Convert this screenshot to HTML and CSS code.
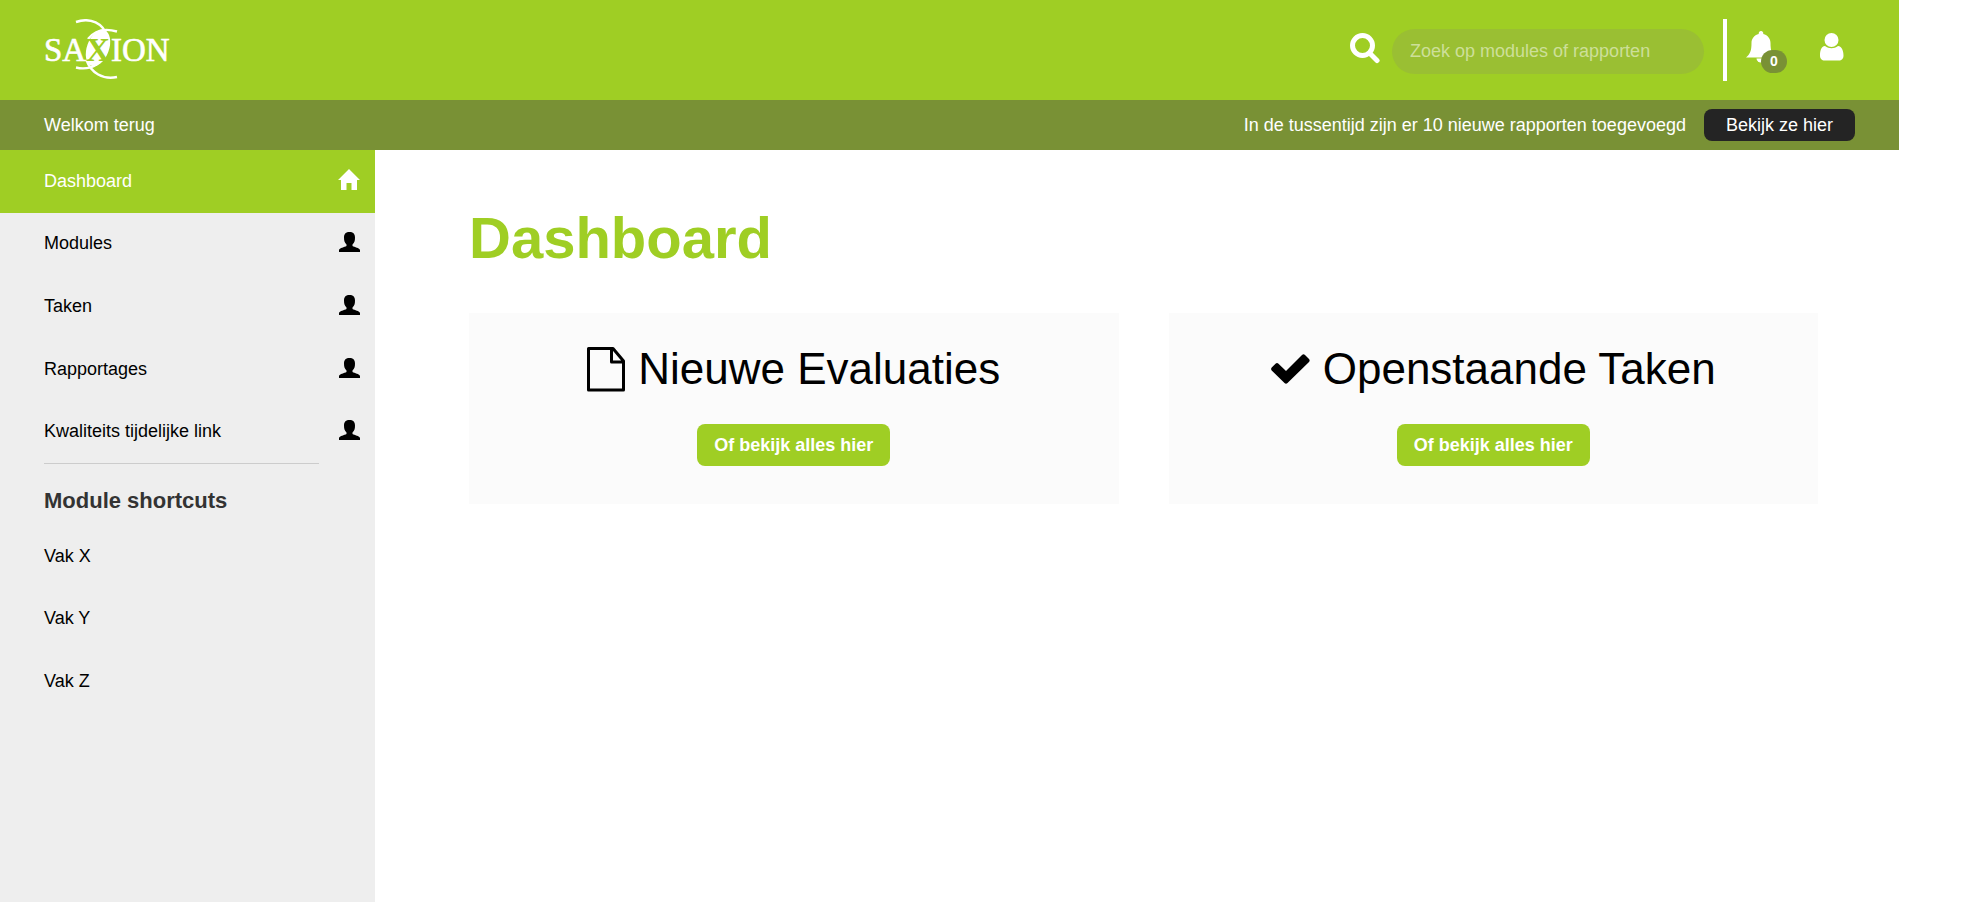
FILE: index.html
```html
<!DOCTYPE html>
<html lang="nl">
<head>
<meta charset="utf-8">
<title>Saxion - Dashboard</title>
<link rel="stylesheet" href="styles.css">
</head>
<body>
<div class="page">
  <header class="header">
    <a class="logo" href="#" aria-label="Saxion">
      <svg width="126" height="62" viewBox="0 0 126 62" fill="#fff">
        <g class="logo-text">
          <text x="0" y="42">SA</text>
          <text x="67" y="42">ION</text>
        </g>
        <ellipse cx="54" cy="29" rx="11" ry="19" transform="rotate(20 54 29)"/>
        <g fill="none" stroke="#fff" stroke-width="2.400">
          <path d="M32 3C46 -2 60 4 63 18"/>
          <path d="M44 20C51 11 61 9 73 12.500"/>
          <path d="M32 48.500C42 51 52 48 57 41"/>
          <path d="M42.500 41C47 54 59 61 73 58"/>
        </g>
        <text class="logo-x" x="54" y="42">X</text>
      </svg>
    </a>
    <form class="search" role="search">
      <button class="icon-button" type="button" aria-label="Zoeken">
        <svg width="30" height="31" viewBox="0 0 30 31" fill="none" stroke="#fff" stroke-linecap="round">
          <circle cx="12.500" cy="12.500" r="10" stroke-width="5"/>
          <path d="M20 20.500L27 27.500" stroke-width="5"/>
        </svg>
      </button>
      <input class="search-input" type="search" aria-label="Zoek op modules of rapporten" placeholder="Zoek op modules of rapporten">
    </form>
    <div class="user-tools">
      <button class="icon-button bell" type="button" aria-label="Meldingen">
        <svg width="30" height="32" viewBox="0 0 30 32" fill="#fff">
          <path d="M15 0a2.300 2.300 0 0 1 2.200 3C22 4 24.500 8 24.500 12C24.500 20 26 23 30 26.500H0C4 23 5.500 20 5.500 12C5.500 8 8 4 12.800 3A2.300 2.300 0 0 1 15 0Z"/>
          <path d="M10.500 27.500A4.500 4 0 0 0 15 31.500A4.500 4 0 0 0 19.500 27.500Z"/>
        </svg>
        <span class="badge">0</span>
      </button>
      <button class="icon-button" type="button" aria-label="Profiel">
        <svg width="24" height="28" viewBox="0 0 24 28" fill="#fff">
          <circle cx="11.500" cy="7" r="7"/>
          <path d="M5 13C9 16 14 16 18 13C22 13.500 23.500 18 23.500 22.500C23.500 26 21.500 27.500 19 27.500H4.500C2 27.500 0 26 0 22.500C0 18 1 13.500 5 13Z"/>
        </svg>
      </button>
    </div>
  </header>
  <div class="welcome">
    <span>Welkom terug</span>
    <span class="welcome-news">In de tussentijd zijn er 10 nieuwe rapporten toegevoegd</span>
    <a class="dark-button" href="#">Bekijk ze hier</a>
  </div>
  <div class="body">
    <aside class="sidebar">
      <svg class="symbols" aria-hidden="true">
        <symbol id="person" viewBox="0 0 21 20">
          <path d="M10.500 0C14 0 16 1.800 16 5.500C16 9 15.500 10.500 13.500 12.500V14C15.500 15 20.500 16 21 18V20H0V18C.5 16 5.500 15 7.500 14V12.500C5.500 10.500 5 9 5 5.500C5 1.800 7 0 10.500 0Z"/>
        </symbol>
      </svg>
      <nav class="nav">
        <a class="nav-item active" href="#">Dashboard
          <svg width="22" height="21" viewBox="0 0 22 21"><path d="M11 0L22 11H19V21H13.500V14H8.500V21H3V11H0Z"/></svg></a>
        <a class="nav-item" href="#">Modules <svg width="21" height="20"><use href="#person"/></svg></a>
        <a class="nav-item" href="#">Taken <svg width="21" height="20"><use href="#person"/></svg></a>
        <a class="nav-item" href="#">Rapportages <svg width="21" height="20"><use href="#person"/></svg></a>
        <a class="nav-item" href="#">Kwaliteits tijdelijke link <svg width="21" height="20"><use href="#person"/></svg></a>
      </nav>
      <hr class="rule">
      <h2 class="shortcuts-title">Module shortcuts</h2>
      <nav class="nav shortcuts">
        <a class="nav-item" href="#">Vak X</a>
        <a class="nav-item" href="#">Vak Y</a>
        <a class="nav-item" href="#">Vak Z</a>
      </nav>
    </aside>
    <main class="main">
      <h1 class="title">Dashboard</h1>
      <div class="cards">
        <section class="card">
          <h2 class="card-title">
            <svg width="38" height="45" viewBox="0 0 38 45" fill="none" stroke="#000" stroke-width="3" stroke-linejoin="round"><path d="M1.500 1.500H26L36.500 14V43H1.500ZM24.500 2V15H36"/></svg>
            Nieuwe Evaluaties</h2>
          <a class="green-button" href="#">Of bekijk alles hier</a>
        </section>
        <section class="card">
          <h2 class="card-title">
            <svg width="39" height="30" viewBox="0 0 39 30"><path d="M0.700 13.500L4.500 9.700Q6 8.500 7.500 9.700L15 17L31 1Q32.500 -.3 34 1L38 5Q39.300 6.500 38 8L16.500 29Q15 30.300 13.500 29L0.700 16.500Q-.5 15 0.700 13.500Z"/></svg>
            Openstaande Taken</h2>
          <a class="green-button" href="#">Of bekijk alles hier</a>
        </section>
      </div>
    </main>
  </div>
</div>
</body>
</html>
```
FILE: styles.css
```css
* {
  box-sizing: border-box;
}

body {
  margin: 0;
  background: #fff;
  color: #000;
  font: 18px/24px "Liberation Sans", Arial, sans-serif;
}

a {
  color: inherit;
  text-decoration: none;
}

svg {
  display: block;
  flex: none;
}

.page {
  display: flex;
  flex-direction: column;
  min-height: 100vh;
  margin-right: 62px;
}

.header {
  display: flex;
  align-items: center;
  height: 100px;
  padding: 0 55px 0 44px;
  background: #9fce24;
}

.logo {
  margin-right: auto;
}

.logo-text,
.logo-x {
  font: 33px "Liberation Serif", serif;
  stroke: #fff;
  stroke-width: 0.6px;
}

.logo-x {
  fill: #9fce24;
  font-weight: bold;
  stroke: none;
  text-anchor: middle;
}

.icon-button {
  position: relative;
  padding: 0;
  border: 0;
  background: none;
  color: #fff;
}

.search {
  display: flex;
  align-items: center;
  gap: 12px;
  margin-right: 19px;
  padding-top: 2px;
}

.search .icon-button {
  padding-bottom: 6px;
}

.search-input {
  width: 312px;
  height: 45px;
  padding: 0 18px;
  border: 0;
  border-radius: 23px;
  background: #9abf33;
  color: #fff;
  font: inherit;
}

.search-input::placeholder {
  color: #cddf99;
  opacity: 1;
}

.user-tools {
  display: flex;
  align-items: center;
  gap: 44px;
  height: 62px;
  padding: 0 0 6px 19px;
  border-left: 4px solid #fff;
}

.badge {
  position: absolute;
  top: 19px;
  left: 15px;
  width: 26px;
  border-radius: 12px;
  background: #799135;
  font: bold 14px/23px "Liberation Sans", Arial, sans-serif;
}

.welcome {
  display: flex;
  align-items: center;
  gap: 18px;
  height: 50px;
  padding: 0 44px;
  background: #799135;
  color: #fff;
}

.welcome-news {
  margin-left: auto;
}

.dark-button {
  padding: 4px 22px;
  border-radius: 8px;
  background: #242424;
}

.body {
  display: flex;
  flex: 1;
}

.sidebar {
  flex: none;
  width: 375px;
  background: #eee;
}

.symbols {
  position: absolute;
  width: 0;
  height: 0;
}

.nav {
  display: grid;
  grid-auto-rows: 1fr;
  height: 313px;
}

.nav-item {
  display: flex;
  align-items: center;
  justify-content: space-between;
  padding: 0 15px 1px 44px;
}

.nav-item svg {
  margin-bottom: 2px;
}

.active {
  background: #9fce24;
  color: #fff;
  fill: #fff;
}

.rule {
  height: 1px;
  margin: 0 56px 0 44px;
  border: 0;
  background: #ccc;
}

.shortcuts-title {
  margin: 24px 44px 12px;
  color: #333;
  font-size: 22px;
  line-height: 25px;
}

.shortcuts {
  height: 188px;
}

.main {
  flex: 1;
  padding: 56px 81px 56px 94px;
}

.title {
  margin: 0 0 44px;
  color: #9fce24;
  font-size: 58px;
  line-height: 63px;
}

.cards {
  display: grid;
  grid-template-columns: 1fr 1fr;
  gap: 50px;
}

.card {
  display: flex;
  flex-direction: column;
  align-items: center;
  gap: 30px;
  padding: 31px 20px 38px;
  background: #fbfbfb;
}

.card-title {
  display: flex;
  align-items: center;
  gap: 13px;
  margin: 0;
  font-size: 44px;
  font-weight: normal;
  line-height: 50px;
}

.green-button {
  padding: 9px 17px;
  border-radius: 8px;
  background: #9fce24;
  color: #fff;
  font-weight: bold;
}
```
